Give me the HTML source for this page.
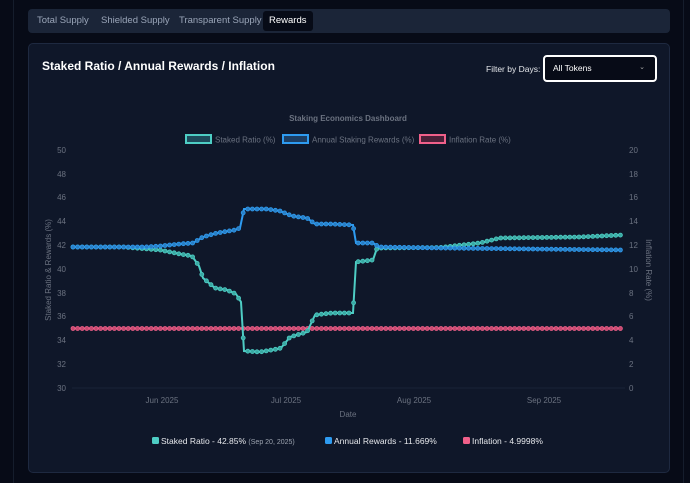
<!DOCTYPE html>
<html><head><meta charset="utf-8"><style>
body{margin:0;width:690px;height:483px;background:#070b17;font-family:"Liberation Sans",sans-serif;overflow:hidden;position:relative}
.tabs{position:absolute;left:28px;top:9px;width:642px;height:24px;background:#1b2538;border-radius:4px}
.tab{position:absolute;top:2px;height:20px;line-height:20px;font-size:9.5px;color:#9aa5b8;padding:0 6px}
.tab.on{background:#070b17;color:#fff;border-radius:3px}
.card{position:absolute;left:28px;top:43px;width:642px;height:430px;background:#0f1729;border:1px solid #1e2940;border-radius:5px;box-sizing:border-box}
.vl{position:absolute;top:0;width:1px;height:483px;background:#151d2c}
</style></head><body>
<div class="vl" style="left:13px"></div><div class="vl" style="left:683px"></div>
<div class="tabs">
<div class="tab" style="left:3px">Total Supply</div>
<div class="tab" style="left:67px">Shielded Supply</div>
<div class="tab" style="left:145px">Transparent Supply</div>
<div class="tab on" style="left:235px">Rewards</div>
</div>
<div class="card"></div>
<div style="position:absolute;left:42px;top:59px;font-size:12px;font-weight:bold;color:#fff">Staked Ratio / Annual Rewards / Inflation</div>
<div style="position:absolute;left:486px;top:64px;font-size:8.5px;color:#e5e7eb">Filter by Days:</div>
<div style="position:absolute;left:543px;top:55px;width:114px;height:27px;box-sizing:border-box;border:2px solid #fff;border-radius:4px;background:#070b17;color:#fff;font-size:8.5px;line-height:23px;padding-left:8px">All Tokens<span style="position:absolute;right:10px;top:-1px;font-size:7px;color:#aaa">&#8964;</span></div>
<svg width="690" height="483" style="position:absolute;left:0;top:0" id="s" font-family="Liberation Sans, sans-serif">
<text x="348" y="121" text-anchor="middle" font-size="8" font-weight="bold" fill="#6b7280">Staking Economics Dashboard</text>
<rect x="186" y="135" width="25" height="8" fill="#1e4a5a" stroke="#4ecdc4" stroke-width="2"/>
<text x="215" y="142.5" font-size="8" fill="#6b7280">Staked Ratio (%)</text>
<rect x="283" y="135" width="25" height="8" fill="#1d3e63" stroke="#2e9bf0" stroke-width="2"/>
<text x="312" y="142.5" font-size="8" fill="#6b7280">Annual Staking Rewards (%)</text>
<rect x="420" y="135" width="25" height="8" fill="#4a2038" stroke="#f0608a" stroke-width="2"/>
<text x="449" y="142.5" font-size="8" fill="#6b7280">Inflation Rate (%)</text>
<g font-size="8" fill="#6b7280">
<text x="66" y="153" text-anchor="end">50</text><text x="66" y="177" text-anchor="end">48</text><text x="66" y="200" text-anchor="end">46</text><text x="66" y="224" text-anchor="end">44</text><text x="66" y="248" text-anchor="end">42</text><text x="66" y="272" text-anchor="end">40</text><text x="66" y="296" text-anchor="end">38</text><text x="66" y="319" text-anchor="end">36</text><text x="66" y="343" text-anchor="end">34</text><text x="66" y="367" text-anchor="end">32</text><text x="66" y="391" text-anchor="end">30</text>
<text x="629" y="153">20</text><text x="629" y="177">18</text><text x="629" y="200">16</text><text x="629" y="224">14</text><text x="629" y="248">12</text><text x="629" y="272">10</text><text x="629" y="296">8</text><text x="629" y="319">6</text><text x="629" y="343">4</text><text x="629" y="367">2</text><text x="629" y="391">0</text>
<text x="162" y="403" text-anchor="middle">Jun 2025</text><text x="286" y="403" text-anchor="middle">Jul 2025</text><text x="414" y="403" text-anchor="middle">Aug 2025</text><text x="544" y="403" text-anchor="middle">Sep 2025</text>
<text x="348" y="417" text-anchor="middle">Date</text>
<text transform="translate(51,270) rotate(-90)" text-anchor="middle">Staked Ratio &amp; Rewards (%)</text>
<text transform="translate(646,270) rotate(90)" text-anchor="middle">Inflation Rate (%)</text>
</g>
<line x1="72" y1="388" x2="625" y2="388" stroke="#1a2336" stroke-width="1"/>
<g id="g"></g>
<rect x="152" y="437" width="7" height="7" rx="1.5" fill="#4ecdc4"/>
<text x="161" y="444" font-size="8.5" fill="#e5e7eb">Staked Ratio - 42.85% <tspan font-size="7" fill="#9ca3af">(Sep 20, 2025)</tspan></text>
<rect x="325" y="437" width="7" height="7" rx="1.5" fill="#2e9bf0"/>
<text x="334" y="444" font-size="8.5" fill="#e5e7eb">Annual Rewards - 11.669%</text>
<rect x="463" y="437" width="7" height="7" rx="1.5" fill="#f0608a"/>
<text x="472" y="444" font-size="8.5" fill="#e5e7eb">Inflation - 4.9998%</text>
</svg>
<script>
var S=[[73,247],[123,247],[160,250],[180,254],[192,256],[199,266],[203,278],[215,288],[227,290],[236,294],[241,302],[244,351],[260,352],[277,349],[281,348],[290,337],[307,332],[315,315],[332,313],[353,313],[356,262],[373,260],[377,248],[440,247.5],[480,243],[500,238],[580,237],[622,235]];
var R=[[73,247],[145,247],[160,246],[180,244],[193,243],[203,237],[217,233],[235,230],[240,228],[244,209],[267,209],[280,211],[292,216],[307,218],[315,224],[332,224],[353,225],[356,243],[373,243],[379,247],[440,248],[622,250]];
var I=[[73,328.5],[622,328.5]];
function at(P,x){for(var i=1;i<P.length;i++){if(x<=P[i][0]){var a=P[i-1],b=P[i];return a[1]+(b[1]-a[1])*(x-a[0])/(b[0]-a[0]);}}return P[P.length-1][1];}
var h='';
function draw(P,c,f){h+='<polyline fill="none" stroke="'+c+'" stroke-width="2" points="'+P.map(function(p){return p.join(',')}).join(' ')+'"/>';
for(var x=73;x<=622;x+=4.6){h+='<circle cx="'+x.toFixed(1)+'" cy="'+at(P,x).toFixed(1)+'" r="2" fill="'+f+'" stroke="'+c+'" stroke-width="0.8"/>';}}
draw(I,'#f0608a','#c84a70');draw(S,'#4ecdc4','#3aa9a3');draw(R,'#2e9bf0','#2a7fc4');
document.getElementById('g').innerHTML=h;
</script>
</body></html>
